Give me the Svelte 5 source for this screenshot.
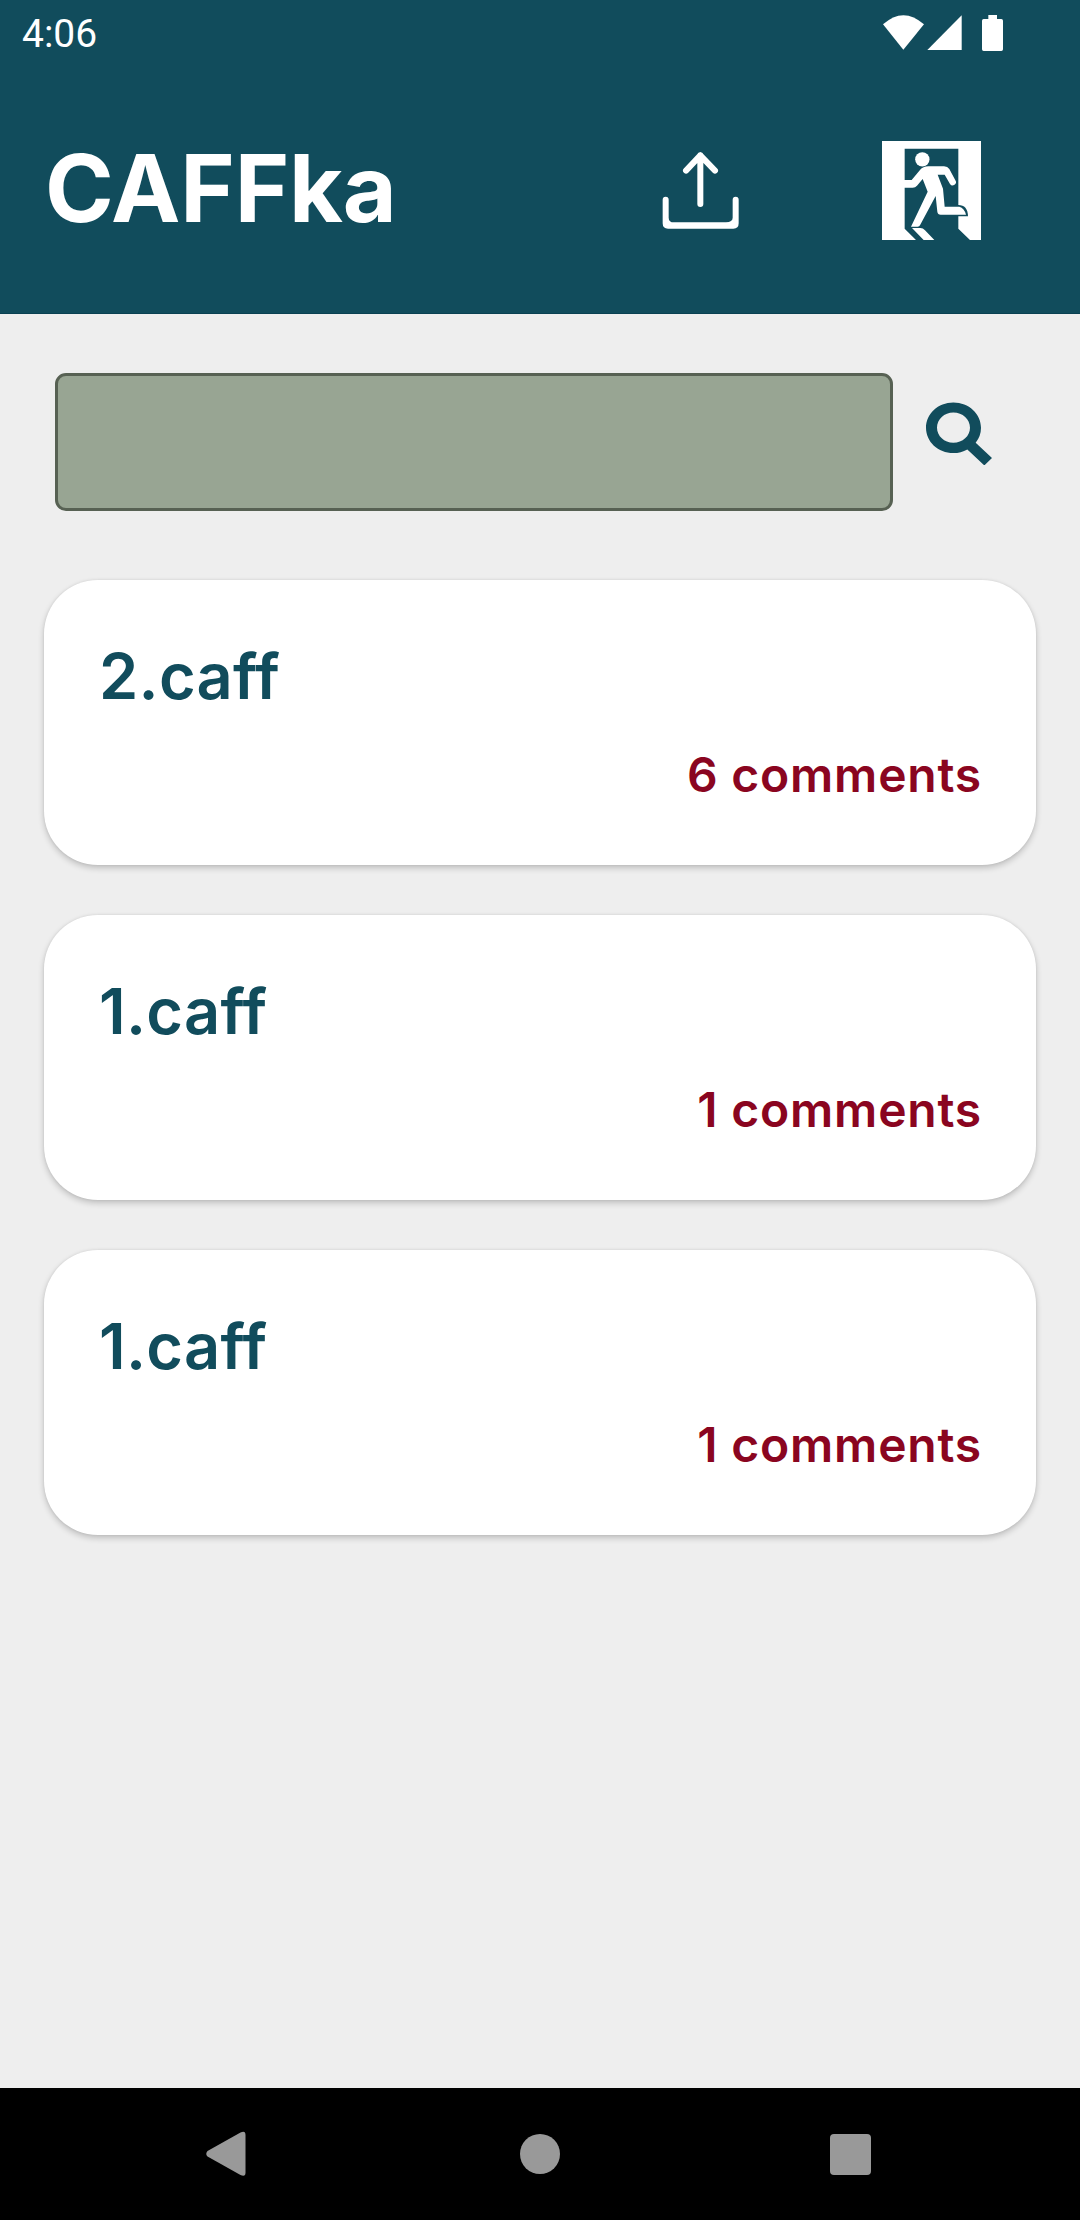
<script>
  const files = [
    { name: '2.caff', comments: 6 },
    { name: '1.caff', comments: 1 },
    { name: '1.caff', comments: 1 },
  ];
  let query = $state('');
</script>

<div class="screen">
  <header>
    <div class="status">
      <span class="clock">4:06</span>
      <svg class="indicators" viewBox="0 0 360 108" aria-hidden="true">
        <path d="M0 28Q61-27 123 28L61 104Z" />
        <path d="M133 105L236 1V105Z" />
        <path d="M316 0h26v12h13q5 0 5 5v86q0 5-5 5h-53q-5 0-5-5V17q0-5 5-5h14Z" />
      </svg>
    </div>
    <div class="toolbar">
      <h1>CAFFka</h1>
      <button class="upload" aria-label="Upload">
        <svg viewBox="66 96 231 231">
          <path class="arrow" d="M181 252V106M138 152L181 106L225 152" />
          <path d="M68 239a9 9 0 0 1 18 0v54q0 14 16 14h156q20-1 20-14v-54a9 9 0 0 1 18 0v71q0 16-16 16H84q-16 0-16-16Z" />
        </svg>
      </button>
      <button class="exit" aria-label="Log out">
        <svg viewBox="51 48 297 297">
          <path d="M51 48H348V345H315L280 311V274H309Q308 240 280 240V71H119V165H140L165 135Q174 124 190 124H237Q248 124 253 132L271 166A9 9 0 0 1 255 177L239 149H218L234 191L239 245H283Q298 249 303 269H227Q218 269 217 260L212 213L165 301Q163 305 158 305H138L188 200L173 162L156 182Q151 188 143 188H119V311L153 345H51Z" />
          <circle cx="172" cy="103" r="21.5" />
          <path d="M141 309H166Q174 309 180 316L208 345H176Z" />
        </svg>
      </button>
    </div>
  </header>

  <main>
    <form class="search" onsubmit={(e) => e.preventDefault()}>
      <input aria-label="Search" bind:value={query} />
      <button aria-label="Search">
        <svg viewBox="198 125 198 190">
          <path fill-rule="evenodd" d="M280 126C327 126 363 160 363 202Q363 227 347 247L396 293L373 315L322 267Q303 278 280 278C234 278 198 244 198 202C198 160 234 126 280 126ZM280 156C253 156 231 176 231 202C231 227 253 247 280 247C308 247 330 227 330 202C330 176 308 156 280 156Z" />
        </svg>
      </button>
    </form>

    <ul>
      {#each files as file}
        <li>
          <h2>{file.name}</h2>
          <p>{file.comments} comments</p>
        </li>
      {/each}
    </ul>
  </main>

  <nav>
    <button aria-label="Back">
      <svg viewBox="0 0 40 46"><path d="M1.500 20L34.500 1.500Q39.500-1 39.500 4V41.500Q39.500 46.500 34.500 44L1.500 25.500Q-1 23 1.500 20Z" /></svg>
    </button>
    <button aria-label="Home"><span class="home"></span></button>
    <button aria-label="Recent apps"><span class="recent"></span></button>
  </nav>
</div>

<style>
  :global(body) { margin: 0; }
  .screen {
    display: flex;
    flex-direction: column;
    width: 1080px;
    height: 2220px;
    background: #eee;
    font-family: Inter, sans-serif;
  }
  button {
    display: flex;
    align-items: center;
    justify-content: center;
    padding: 0;
    border: 0;
    background: none;
    color: inherit;
  }
  svg { display: block; fill: currentColor; }
  header {
    box-sizing: border-box;
    height: 314px;
    border-bottom: 1px solid #0a4152;
    background: #114c5c;
    color: #fff;
  }
  .status {
    display: flex;
    justify-content: space-between;
    align-items: flex-start;
    height: 66px;
    padding: 0 77px 0 22px;
  }
  .clock { font: 39px/69px Roboto, sans-serif; }
  .indicators { width: 120px; height: 36px; margin-top: 15px; }
  .toolbar { display: flex; align-items: center; height: 249px; padding: 0 99px 0 45px; }
  h1 { margin: 0 auto 0 0; padding-bottom: 5px; font-size: 93px; font-weight: 700; line-height: 112px; letter-spacing: -.2px; }
  .upload { margin-right: 143px; }
  .upload svg { width: 77px; height: 77px; }
  .arrow { fill: none; stroke: currentColor; stroke-width: 18; stroke-linecap: round; stroke-linejoin: round; }
  .exit svg { width: 99px; height: 99px; }
  main { flex: 1; padding: 59px 44px 0; }
  .search { display: flex; align-items: flex-start; gap: 33px; padding-left: 11px; }
  input {
    box-sizing: border-box;
    width: 838px;
    height: 138px;
    padding: 0 24px;
    border: 3px solid #576153;
    border-radius: 11px;
    outline: 0;
    background: #98a593;
    font: 48px Inter, sans-serif;
  }
  .search button { margin-top: 28.500px; color: #114c5c; }
  .search svg { width: 66px; height: 63.500px; }
  ul { display: flex; flex-direction: column; gap: 50px; margin: 69px 0 0; padding: 0; list-style: none; }
  li {
    box-sizing: border-box;
    display: flex;
    flex-direction: column;
    height: 285px;
    padding: 56px 54px 0 55px;
    border-radius: 54px;
    background: #fff;
    box-shadow: 0 3px 6px rgba(0, 0, 0, .2), 0 0 3px rgba(0, 0, 0, .08);
  }
  h2 { margin: 0; color: #114c5c; font-size: 63px; font-weight: 600; line-height: 80px; letter-spacing: .3px; }
  p { margin: 27px 0 0; color: #8a0520; font-size: 48px; font-weight: 600; line-height: 64px; letter-spacing: .8px; text-align: right; }
  nav { display: grid; grid-template-columns: repeat(3, 310px); justify-content: center; height: 132px; background: #000; color: #999; }
  nav svg { width: 40px; height: 46px; margin-left: -9px; }
  .home { width: 40px; height: 40px; border-radius: 50%; background: currentColor; }
  .recent { width: 41px; height: 41px; border-radius: 4px; background: currentColor; }
</style>
